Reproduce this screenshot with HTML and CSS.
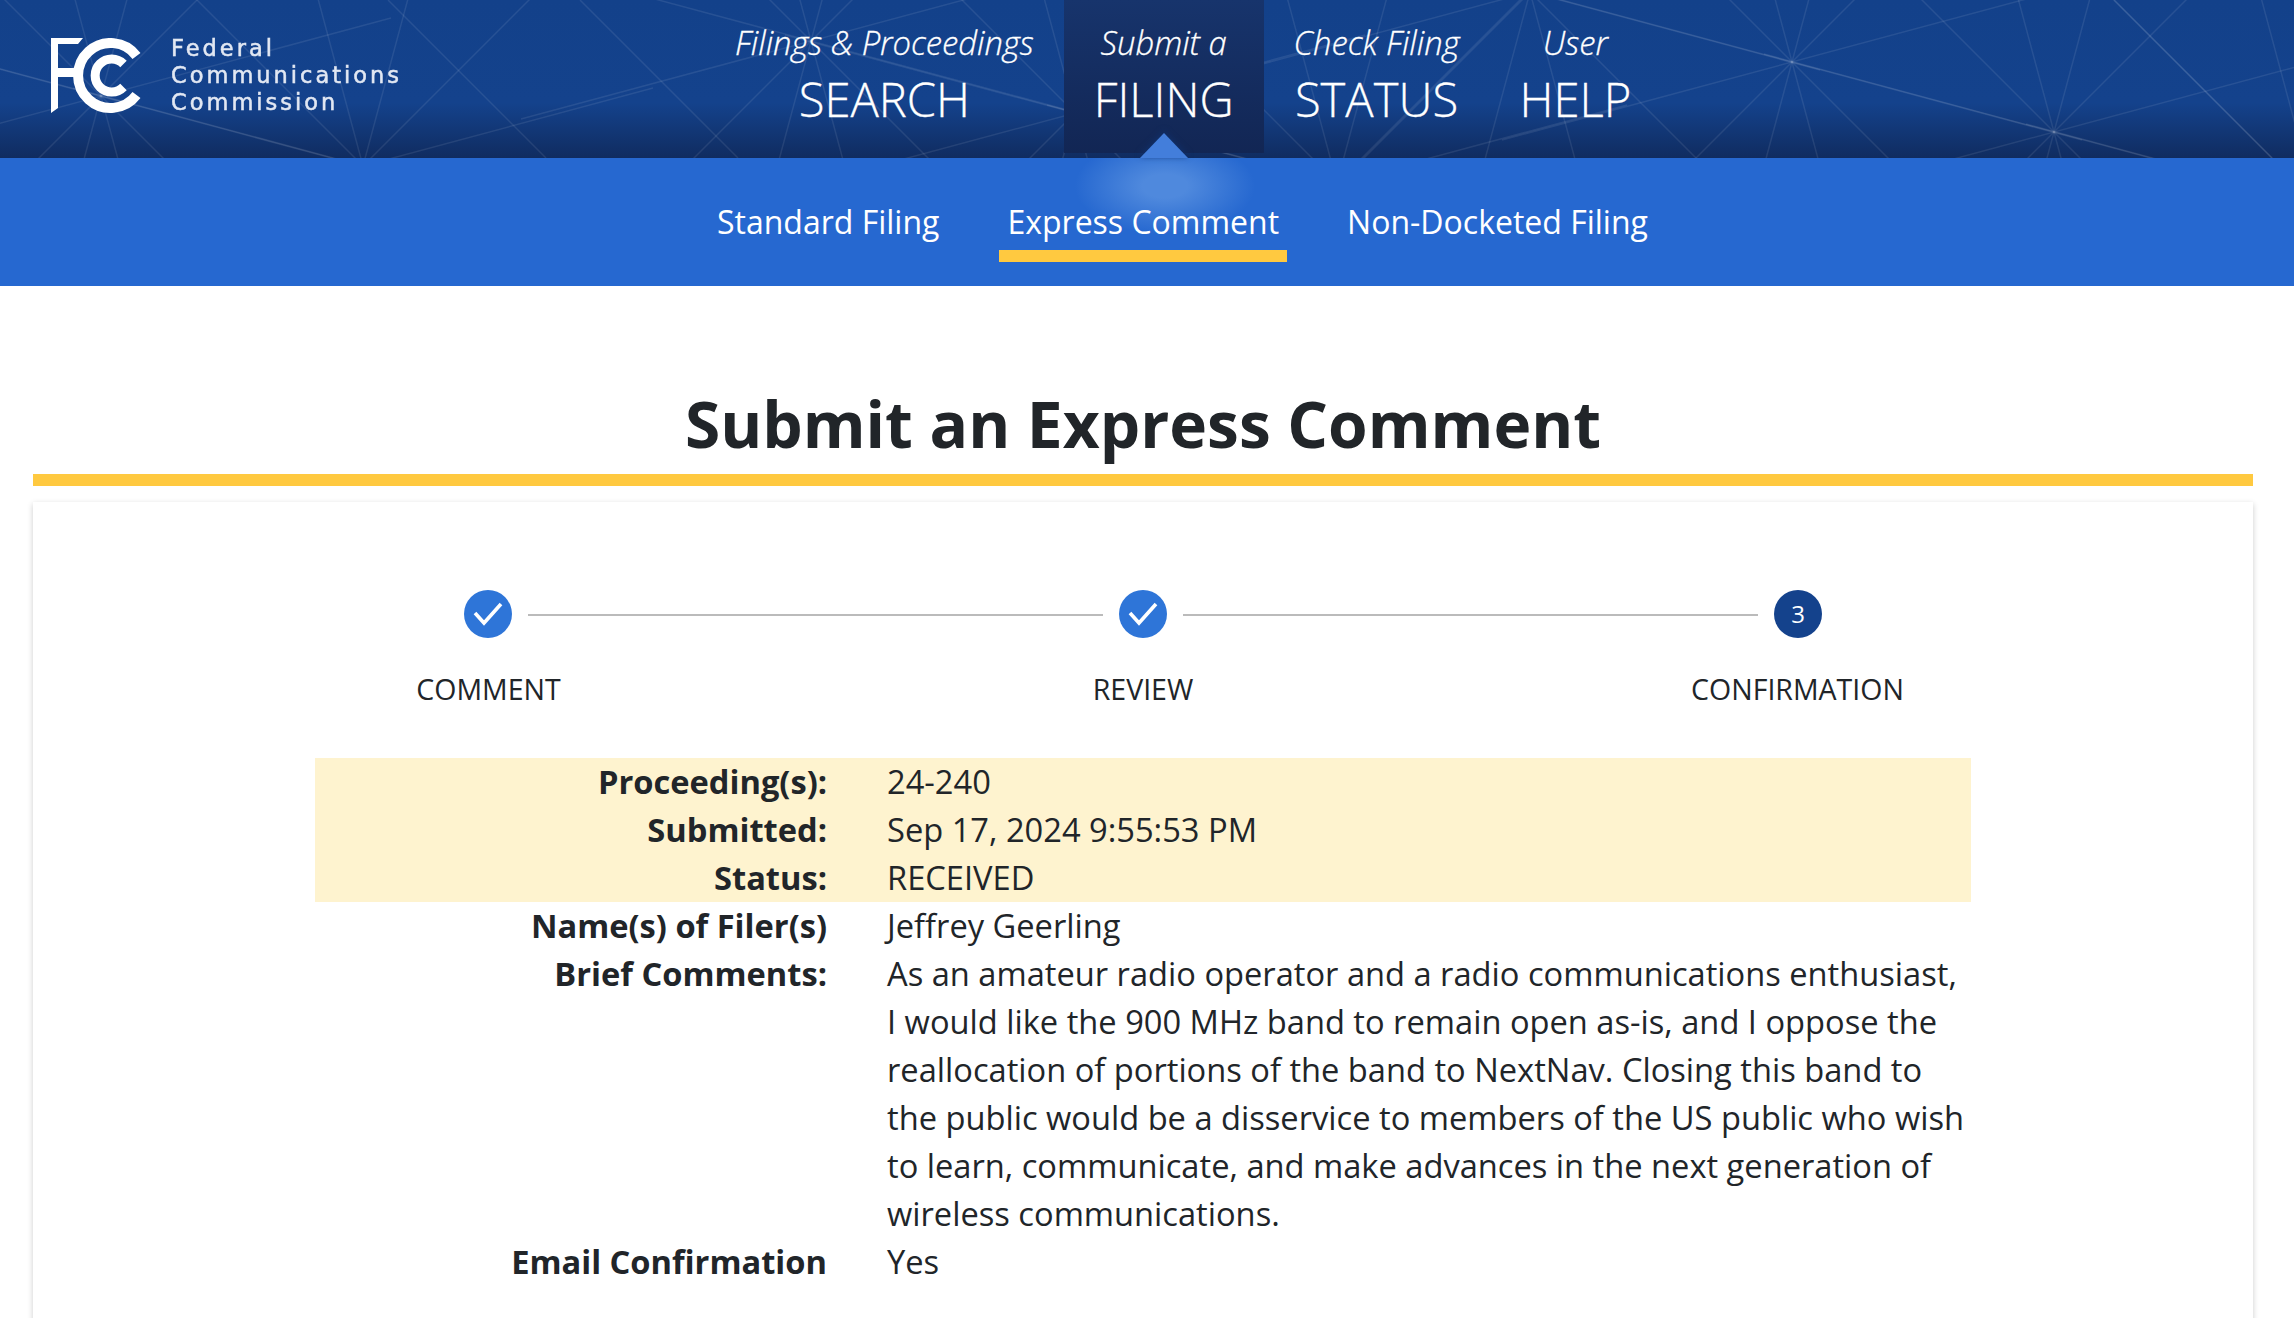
FILE: index.html
```html
<!DOCTYPE html>
<html lang="en">
<head>
    <meta charset="UTF-8">
    <meta name="viewport" content="width=device-width, initial-scale=1.0">
    <title>Submit an Express Comment</title>
    <link rel="stylesheet" href="styles.css">
</head>
<body>
    <header class="topbar">
        <svg class="mesh" width="2294" height="158" viewBox="0 0 2294 158" aria-hidden="true">
            <defs>
                <g id="star">
                    <line x1="-290" y1="-78" x2="290" y2="78"/>
                    <line x1="-290" y1="78" x2="290" y2="-78"/>
                    <line x1="-212" y1="-212" x2="212" y2="212"/>
                    <line x1="-212" y1="212" x2="212" y2="-212"/>
                    <line x1="-78" y1="-290" x2="78" y2="290"/>
                    <line x1="-78" y1="290" x2="78" y2="-290"/>
                </g>
            </defs>
            <use href="#star" x="-161" y="26"/>
            <use href="#star" x="101" y="96"/>
            <use href="#star" x="363" y="166"/>
            <use href="#star" x="811" y="41"/>
            <use href="#star" x="1075" y="113"/>
            <use href="#star" x="1337" y="183"/>
            <use href="#star" x="1530" y="-8"/>
            <use href="#star" x="1792" y="62"/>
            <use href="#star" x="2054" y="132"/>
            <use href="#star" x="2316" y="202"/>
            <line x1="388" y1="0" x2="546" y2="158"/>
            <line x1="580" y1="0" x2="738" y2="158"/>
            <line x1="2114" y1="0" x2="2272" y2="158"/>
        </svg>
        <a class="logo" href="#">
            <svg class="logo-mark" width="90" height="76" viewBox="0 0 90 76" aria-label="FCC">
                <polygon points="0,0 32,0 27,6 7,6 7,30 24,30 24,39 7,39 7,70 0,75" fill="#fff"/>
                <path d="M85.5 17.9A32.5 32.5 0 1 0 85.5 57.1" fill="none" stroke="#fff" stroke-width="10"/>
                <path d="M72.5 26A16.5 16.5 0 1 0 72.5 49" fill="none" stroke="#fff" stroke-width="9"/>
            </svg>
            <span class="logo-text">Federal<br>Communications<br>Commission</span>
        </a>
        <nav class="mainnav">
            <a class="mainnav-item" href="#"><em>Filings &amp; Proceedings</em><span>SEARCH</span></a>
            <a class="mainnav-item active" href="#"><em>Submit a</em><span>FILING</span></a>
            <a class="mainnav-item" href="#"><em>Check Filing</em><span>STATUS</span></a>
            <a class="mainnav-item" href="#"><em>User</em><span>HELP</span></a>
        </nav>
    </header>

    <nav class="subnav">
        <a href="#">Standard Filing</a>
        <a href="#" class="active">Express Comment</a>
        <a href="#">Non-Docketed Filing</a>
    </nav>

    <main class="page">
        <h1>Submit an Express Comment</h1>
        <section class="card">
            <div class="steps">
                <span class="step-dot">
                    <svg width="48" height="48" viewBox="0 0 48 48"><path d="M11 23L20 33L37 14" fill="none" stroke="#fff" stroke-width="3.6"/></svg>
                </span>
                <span class="step-line"></span>
                <span class="step-dot">
                    <svg width="48" height="48" viewBox="0 0 48 48"><path d="M11 23L20 33L37 14" fill="none" stroke="#fff" stroke-width="3.6"/></svg>
                </span>
                <span class="step-line"></span>
                <span class="step-dot current">3</span>
            </div>
            <div class="step-labels">
                <span>COMMENT</span>
                <span>REVIEW</span>
                <span>CONFIRMATION</span>
            </div>
            <div class="details">
                <div class="highlight">
                    <div class="row"><strong>Proceeding(s):</strong><span>24-240</span></div>
                    <div class="row"><strong>Submitted:</strong><span>Sep 17, 2024 9:55:53 PM</span></div>
                    <div class="row"><strong>Status:</strong><span>RECEIVED</span></div>
                </div>
                <div class="row"><strong>Name(s) of Filer(s)</strong><span>Jeffrey Geerling</span></div>
                <div class="row"><strong>Brief Comments:</strong><span>As an amateur radio operator and a radio communications enthusiast, I would like the 900 MHz band to remain open as-is, and I oppose the reallocation of portions of the band to NextNav. Closing this band to the public would be a disservice to members of the US public who wish to learn, communicate, and make advances in the next generation of wireless communications.</span></div>
                <div class="row"><strong>Email Confirmation</strong><span>Yes</span></div>
            </div>
        </section>
    </main>
</body>
</html>
```

FILE: styles.css
```css
html, body {
    margin: 0;
    height: 100%;
    overflow: hidden;
}
body {
    font-family: "Open Sans", "Liberation Sans", sans-serif;
    font-size: 32px;
    line-height: 48px;
    color: #212529;
    background: #fff;
}
a {
    color: inherit;
    text-decoration: none;
}

/* top bar */
.topbar {
    position: relative;
    display: flex;
    height: 158px;
    padding-left: 51px;
    color: #fff;
    background: linear-gradient(#13418a 0, #14428c 65%, #102c60 100%);
}
.mesh {
    position: absolute;
    left: 0;
    top: 0;
    stroke: rgba(255, 255, 255, 0.085);
    stroke-width: 1.5;
    filter: blur(0.5px);
}
.logo {
    position: relative;
    display: flex;
    width: 654px;
    padding-top: 38px;
    filter: blur(0.4px);
}
.logo-mark {
    flex: none;
}
.logo-text {
    margin: -3px 0 0 30px;
    font-family: "DejaVu Sans", sans-serif;
    font-size: 22.5px;
    line-height: 27px;
    letter-spacing: 3px;
    color: #e2e8f3;
    -webkit-text-stroke: 0.5px #e2e8f3;
}
.mainnav {
    position: relative;
    display: flex;
}
.mainnav-item {
    position: relative;
    display: flex;
    flex-direction: column;
    align-items: center;
    height: 153px;
    padding: 0 30px;
    font-weight: 300;
}
.mainnav-item em {
    margin-top: 19px;
    font-size: 32.8px;
    line-height: 48px;
    -webkit-text-stroke: 0.3px #fff;
}
.mainnav-item span {
    margin-top: 2px;
    font-size: 47.2px;
    line-height: 60px;
    -webkit-text-stroke: 0.3px #fff;
}
.mainnav-item.active {
    background: linear-gradient(#17346c, #122654);
}
.mainnav-item.active::after {
    content: "";
    position: absolute;
    left: 50%;
    bottom: -5px;
    margin-left: -24px;
    border-left: 24px solid transparent;
    border-right: 24px solid transparent;
    border-bottom: 25px solid #437edb;
    filter: drop-shadow(0 -2px 3px #10306a);
}

/* second row */
.subnav {
    display: flex;
    gap: 52px;
    height: 128px;
    padding-left: 709px;
    box-sizing: border-box;
    color: #fff;
    background: #2668d0 radial-gradient(ellipse 90px 48px at 1165px 28px, #4f89dd 25%, rgba(38, 104, 208, 0) 100%);
}
.subnav a {
    height: 104px;
    padding: 40px 8px 0;
    box-sizing: border-box;
    line-height: 48px;
}
.subnav a.active {
    border-bottom: 12px solid #ffc940;
}

/* main content */
.page {
    margin: 0 41px 0 33px;
}
h1 {
    margin: 0;
    padding-top: 96px;
    height: 92px;
    border-bottom: 12px solid #ffc940;
    font-size: 64px;
    line-height: 84px;
    font-weight: 700;
    text-align: center;
}
.card {
    margin-top: 16px;
    padding-top: 88px;
    height: 1000px;
    background: #fff;
    box-shadow: 0 2px 6px rgba(0, 0, 0, 0.2);
}
.steps {
    display: flex;
    align-items: center;
    width: 1358px;
    margin: 0 auto;
}
.step-dot {
    display: flex;
    flex: none;
    align-items: center;
    justify-content: center;
    width: 48px;
    height: 48px;
    border-radius: 50%;
    background: #2e75d8;
    color: #fff;
    font-size: 24px;
}
.step-dot.current {
    background: #14428c;
}
.step-line {
    flex: 1;
    height: 2px;
    margin: 2px 16px 0;
    background: #bbb;
}
.step-labels {
    display: grid;
    grid-template-columns: repeat(3, 654.5px);
    justify-content: center;
    margin-top: 27px;
    font-size: 28.5px;
    line-height: 48px;
    text-align: center;
}
.details {
    width: 1656px;
    margin: 45px auto 0;
    font-size: 32.65px;
}
.highlight {
    background: #fef3cf;
}
.row {
    display: grid;
    grid-template-columns: 512px 1fr;
    column-gap: 60px;
    padding-right: 6px;
}
.row strong {
    font-weight: 700;
    text-align: right;
}
```
